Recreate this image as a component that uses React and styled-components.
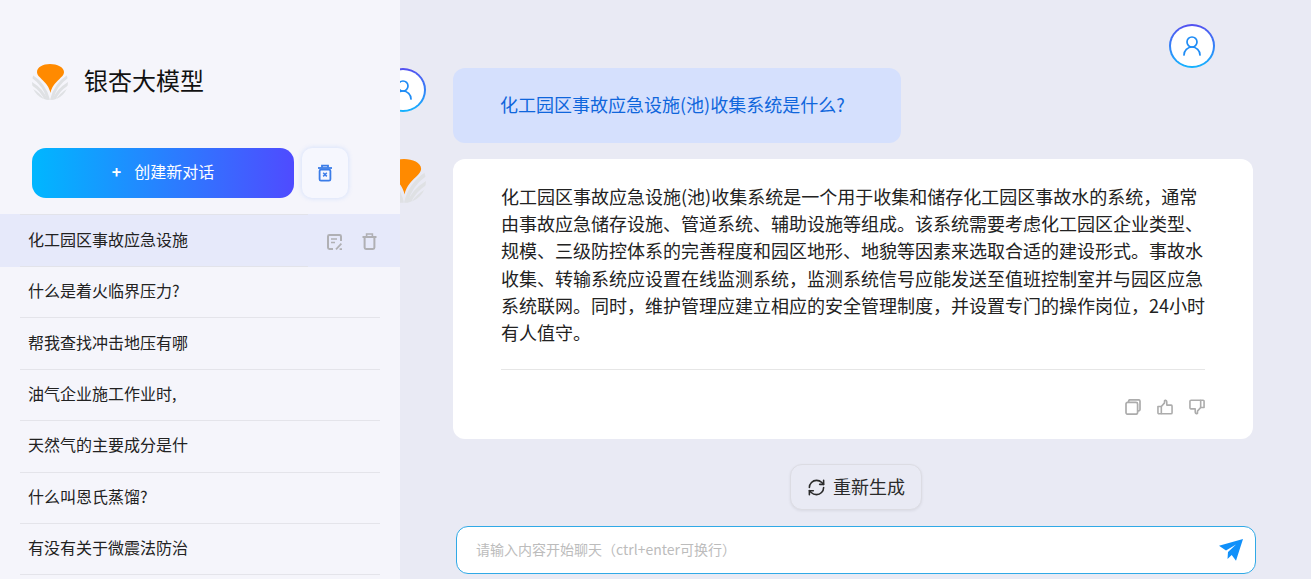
import React from "react";
import styled, { createGlobalStyle } from "styled-components";
import { UserRound, RefreshCw } from "lucide-react";

const Global = createGlobalStyle`
  html, body { margin: 0; padding: 0; height: 100%; }
  body { font-family: "Noto Sans CJK SC", "Liberation Sans", sans-serif; background: #e9eaf4; overflow: hidden; }
  #root { height: 100%; }
  * { box-sizing: border-box; }
`;

const Page = styled.div`
  position: relative;
  width: 1311px;
  height: 579px;
  overflow: hidden;
  background: #e9eaf4;
`;

const Sidebar = styled.aside`
  position: absolute;
  left: 0;
  top: 0;
  bottom: 0;
  z-index: 2;
  width: 400px;
  padding-top: 64px;
  background: #f5f5fb;
  display: flex;
  flex-direction: column;
  overflow: hidden;
`;

const Brand = styled.div`
  display: flex;
  align-items: center;
  gap: 16px;
  padding-left: 32px;
  height: 36px;
`;

const BrandName = styled.h1`
  margin: 0;
  padding-bottom: 4px;
  font-size: 24px;
  font-weight: 400;
  line-height: 32px;
  color: #111;
`;

const Tools = styled.div`
  display: flex;
  gap: 8px;
  margin: 48px 0 16px;
  padding-left: 32px;
`;

const NewChat = styled.button`
  width: 262px;
  height: 50px;
  border: 0;
  border-radius: 14px;
  padding: 0 0 4px;
  background: linear-gradient(90deg, #00b7ff 0%, #4f4bff 100%);
  color: #fff;
  font: inherit;
  font-size: 16px;
  display: flex;
  align-items: center;
  justify-content: center;
  gap: 13px;
`;

const Plus = styled.span`
  font-size: 16px;
  font-weight: 700;
  line-height: 1;
`;

const ClearAll = styled.button`
  width: 46px;
  height: 50px;
  border: 0;
  border-radius: 10px;
  padding: 0;
  background: #f6f7fe;
  box-shadow: 0 0 5px rgba(120, 165, 255, 0.3);
  display: flex;
  align-items: center;
  justify-content: center;
`;

const History = styled.ul`
  list-style: none;
  margin: 0;
  padding: 0;
`;

const HistoryItem = styled.li`
  height: ${(p) => (p.$active ? "53px" : "51.4px")};
  padding: 0 20px;
  background: ${(p) => (p.$active ? "#e6e9fa" : "transparent")};
`;

const HistoryInner = styled.div`
  height: 100%;
  padding: 0 8px;
  display: flex;
  align-items: center;
  justify-content: space-between;
  font-size: 16px;
  color: #222;
  ${(p) =>
    p.$active
      ? `background:
          linear-gradient(#e2e3ea, #e2e3ea) 0 0 / 288px 1px no-repeat,
          linear-gradient(#e2e3ea, #e2e3ea) 0 100% / 288px 1px no-repeat;`
      : "border-bottom: 1px solid #e4e4ea;"}
`;

const ItemLabel = styled.span`
  padding-bottom: 4px;
`;

const ItemActions = styled.div`
  display: flex;
  align-items: center;
  gap: 20px;
  margin-right: -5px;
  padding-top: 2px;
`;

const Main = styled.main`
  height: 100%;
  display: flex;
  flex-direction: column;
`;

const TopBar = styled.header`
  height: 68px;
  padding: 24px 96px 0 0;
  display: flex;
  justify-content: flex-end;
  flex: none;
`;

const Avatar = styled.div`
  flex: none;
  width: 46px;
  height: 44px;
  border-radius: 50%;
  border: 2px solid transparent;
  background: linear-gradient(#fff, #fff) padding-box,
    linear-gradient(180deg, #544ff0 0%, #14b4ff 100%) border-box;
  display: flex;
  align-items: center;
  justify-content: center;
  color: #1f8cf5;
`;

const Thread = styled.section`
  padding-left: 380px;
  display: flex;
  flex-direction: column;
  gap: 16px;
`;

const Row = styled.div`
  display: flex;
  align-items: flex-start;
  gap: 27px;
`;

const BotMark = styled.div`
  flex: none;
  width: 46px;
  height: 44px;
  display: flex;
  justify-content: flex-end;
`;

const Question = styled.div`
  width: 448px;
  padding: 23px 48px 25px 47px;
  border-radius: 12px;
  background: #d5e0fd;
  color: #0f66dc;
  font-size: 18px;
  line-height: 27px;
  white-space: nowrap;
`;

const Answer = styled.article`
  width: 800px;
  height: 280px;
  padding: 24px 48px;
  border-radius: 12px;
  background: #fff;
`;

const AnswerText = styled.p`
  margin: 0;
  font-size: 18px;
  line-height: 27.2px;
  color: #222;
`;

const Divider = styled.hr`
  margin: 23px 0 0;
  border: 0;
  border-top: 1px solid #e6e6e6;
`;

const Feedback = styled.div`
  display: flex;
  justify-content: flex-end;
  gap: 16px;
  margin-top: 29px;
`;

const RegenWrap = styled.div`
  margin-top: 25px;
  padding-left: 456px;
  display: flex;
  justify-content: center;
  width: 1256px;
`;

const Regen = styled.button`
  width: 132px;
  height: 46px;
  border: 1px solid #dcdce3;
  border-radius: 12px;
  padding: 0;
  background: #e9eaf4;
  box-shadow: 0 1px 3px rgba(0, 0, 0, 0.07);
  color: #2a2a2a;
  font: inherit;
  font-size: 18px;
  display: flex;
  align-items: center;
  justify-content: center;
  gap: 7px;
`;

const RegenLabel = styled.span`
  padding-bottom: 2px;
`;

const Composer = styled.div`
  margin: 16px 0 0 456px;
  width: 800px;
  height: 48px;
  border: 1px solid #30a9e6;
  border-radius: 12px;
  background: #fff;
  padding: 0 12px 0 19px;
  display: flex;
  align-items: center;
  justify-content: space-between;
`;

const Placeholder = styled.span`
  padding-bottom: 2px;
  font-size: 14px;
  color: #bcbcbc;
`;

const Logo = ({ size = 36 }) => (
  <svg width={size} height={size} viewBox="0 0 36 36" fill="none">
    <defs>
      <clipPath id="logo-disc">
        <circle cx="18" cy="18" r="18" />
      </clipPath>
    </defs>
    <g clipPath="url(#logo-disc)" stroke="#dfe1e4" strokeWidth="3">
      <path d="M16.5 36C14 25 8 17 -2 11" />
      <path d="M14.5 37C12 30 6 23 -2 18.5" />
      <path d="M12 38C9 33 5 29 -1 25.5" />
      <path d="M19.5 36C22 25 28 17 38 11" />
      <path d="M21.5 37C24 30 30 23 38 18.5" />
      <path d="M24 38C27 33 31 29 37 25.5" />
    </g>
    <path
      d="M5 8C5 3 11 0 18 0C25 0 32 3 32 8C32 14 21 17 18.5 29C16 17 5 14 5 8Z"
      fill="#ff8a00"
    />
  </svg>
);

const BinX = () => (
  <svg width="16" height="18" viewBox="0 0 16 18" fill="none" stroke="#3b7ce8" strokeWidth="1.8">
    <path d="M1 4H15" />
    <path d="M5 3.6V1.6H11V3.6" />
    <rect x="2.6" y="5.6" width="10.8" height="11" rx="1.4" />
    <path d="M6.2 8.8L9.8 12.4M9.8 8.8L6.2 12.4" strokeWidth="1.5" />
  </svg>
);

const EditNote = () => (
  <svg width="15" height="16" viewBox="0 0 15 16" fill="none" stroke="#b0b0b4" strokeWidth="2">
    <path d="M6 15H2.4A1.4 1.4 0 0 1 1 13.6V2.4A1.4 1.4 0 0 1 2.4 1H12.6A1.4 1.4 0 0 1 14 2.4V7" />
    <path d="M4 5H10M4 8.6H8" strokeWidth="1.5" />
    <path d="M9 15.4L14.4 9.6M12.6 15.2H15" strokeWidth="1.7" />
  </svg>
);

const Bin = () => (
  <svg width="15" height="17" viewBox="0 0 15 17" fill="none" stroke="#b0b0b4" strokeWidth="2">
    <path d="M0.5 4H14.5" />
    <path d="M4.6 3.4V1H10.4V3.4" strokeWidth="1.6" />
    <path d="M2.6 4.4V14.6A1.4 1.4 0 0 0 4 16H11A1.4 1.4 0 0 0 12.4 14.6V4.4" />
  </svg>
);

const CopyIcon = () => (
  <svg width="16" height="16" viewBox="0 0 16 16" fill="none" stroke="#acacac" strokeWidth="1.7">
    <rect x="1" y="3.4" width="11.6" height="11.8" rx="1.6" />
    <path d="M3.6 3V2.2A1.4 1.4 0 0 1 5 0.8H13.6A1.4 1.4 0 0 1 15 2.2V10.4A1.4 1.4 0 0 1 13.6 11.8H13" />
  </svg>
);

const ThumbUp = () => (
  <svg width="16" height="16" viewBox="0 0 17 16" fill="none" stroke="#acacac" strokeWidth="1.7" strokeLinejoin="round">
    <path d="M1 7.4H4.6V15.2H2A1 1 0 0 1 1 14.2V7.4Z" />
    <path d="M4.6 7.4L8 3.6V1.4C8 0.6 10.2 0.6 10.4 2.6V6H15A1.2 1.2 0 0 1 16 7.2V14A1.2 1.2 0 0 1 14.8 15.2H4.6" />
  </svg>
);

const ThumbDown = () => (
  <svg width="16" height="16" viewBox="0 0 17 16" fill="none" stroke="#acacac" strokeWidth="1.7" strokeLinejoin="round">
    <path d="M16 8.6H12.4V0.8H15A1 1 0 0 1 16 1.8V8.6Z" />
    <path d="M12.4 8.6L9 12.4V14.6C9 15.4 6.8 15.4 6.6 13.4V10H2A1.2 1.2 0 0 1 1 8.8V2A1.2 1.2 0 0 1 2.2 0.8H12.4" />
  </svg>
);

const SendIcon = () => (
  <svg width="24" height="22" viewBox="0 0 24 22">
    <path
      fill="#1090fa"
      d="M24 0L0 6.7L7 11.5L17 5.5L9 13L8.5 20L12.7 16L17 21.7Z"
    />
  </svg>
);

const history = [
  "化工园区事故应急设施",
  "什么是着火临界压力?",
  "帮我查找冲击地压有哪",
  "油气企业施工作业时,",
  "天然气的主要成分是什",
  "什么叫恩氏蒸馏?",
  "有没有关于微震法防治",
];

export default function App() {
  return (
    <Page>
      <Global />
      <Sidebar>
        <Brand>
          <Logo />
          <BrandName>银杏大模型</BrandName>
        </Brand>
        <Tools>
          <NewChat>
            <Plus>+</Plus>
            创建新对话
          </NewChat>
          <ClearAll aria-label="清空">
            <BinX />
          </ClearAll>
        </Tools>
        <History>
          {history.map((text, i) => (
            <HistoryItem key={text} $active={i === 0}>
              <HistoryInner $active={i === 0}>
                <ItemLabel>{text}</ItemLabel>
                {i === 0 && (
                  <ItemActions>
                    <EditNote />
                    <Bin />
                  </ItemActions>
                )}
              </HistoryInner>
            </HistoryItem>
          ))}
        </History>
      </Sidebar>
      <Main>
        <TopBar>
          <Avatar>
            <UserRound size={24} strokeWidth={1.7} />
          </Avatar>
        </TopBar>
        <Thread>
          <Row>
            <Avatar>
              <UserRound size={24} strokeWidth={1.7} />
            </Avatar>
            <Question>化工园区事故应急设施(池)收集系统是什么?</Question>
          </Row>
          <Row>
            <BotMark>
              <Logo size={44} />
            </BotMark>
            <Answer>
              <AnswerText>
                化工园区事故应急设施(池)收集系统是一个用于收集和储存化工园区事故水的系统，通常由事故应急储存设施、管道系统、辅助设施等组成。该系统需要考虑化工园区企业类型、规模、三级防控体系的完善程度和园区地形、地貌等因素来选取合适的建设形式。事故水收集、转输系统应设置在线监测系统，监测系统信号应能发送至值班控制室并与园区应急系统联网。同时，维护管理应建立相应的安全管理制度，并设置专门的操作岗位，24小时有人值守。
              </AnswerText>
              <Divider />
              <Feedback>
                <CopyIcon />
                <ThumbUp />
                <ThumbDown />
              </Feedback>
            </Answer>
          </Row>
        </Thread>
        <RegenWrap>
          <Regen>
            <RefreshCw size={19} strokeWidth={2} />
            <RegenLabel>重新生成</RegenLabel>
          </Regen>
        </RegenWrap>
        <Composer>
          <Placeholder>请输入内容开始聊天（ctrl+enter可换行）</Placeholder>
          <SendIcon />
        </Composer>
      </Main>
    </Page>
  );
}
